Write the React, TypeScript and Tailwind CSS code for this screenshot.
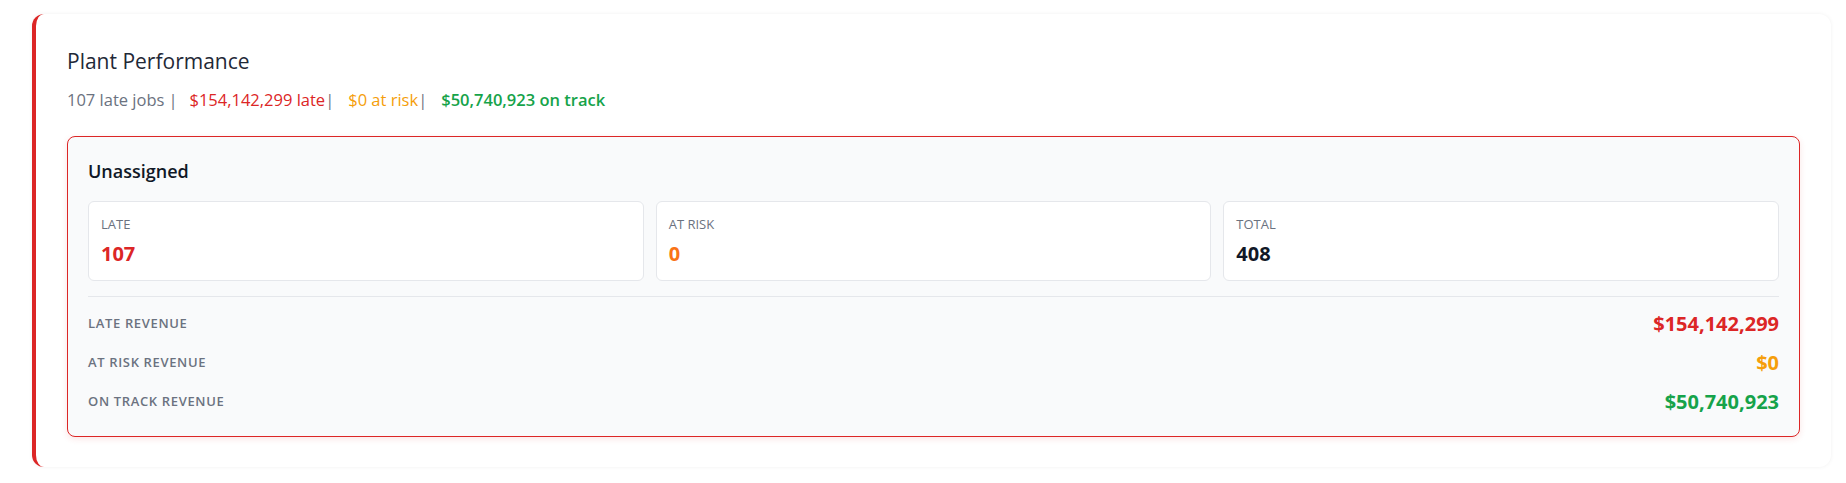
import React from "react";

type Stat = {
  label: string;
  value: string;
  tone: string;
};

type RevenueRow = {
  label: string;
  value: string;
  tone: string;
};

const stats: Stat[] = [
  { label: "Late", value: "107", tone: "text-[#dc2626]" },
  { label: "At Risk", value: "0", tone: "text-[#f97316]" },
  { label: "Total", value: "408", tone: "text-[#111827]" },
];

const revenue: RevenueRow[] = [
  { label: "Late Revenue", value: "$154,142,299", tone: "text-[#dc2626]" },
  { label: "At Risk Revenue", value: "$0", tone: "text-[#f59e0b]" },
  { label: "On Track Revenue", value: "$50,740,923", tone: "text-[#16a34a]" },
];

export default function App() {
  return (
    <div
      className="min-h-screen w-full bg-white pt-[14px] pb-4 pl-8 pr-[15px]"
      style={{ fontFamily: '"Open Sans", "Noto Sans", sans-serif' }}
    >
      <div className="w-full rounded-xl border-l-4 border-[#dc2626] bg-white px-[31px] pt-8 pb-[30px] shadow-[0_0_4px_rgba(0,0,0,0.06)]">
        <h1 className="text-[21px] leading-[30px] font-medium text-[#1f2937]">Plant Performance</h1>
        <p className="mt-3 text-[16.5px] leading-6 text-[#6b7280]">
          <span>107 late jobs</span>
          <span className="ml-1">|</span>
          <span className="ml-3 font-medium text-[#dc2626]">$154,142,299 late</span>
          <span>|</span>
          <span className="ml-[14px] font-medium text-[#f59e0b]">$0 at risk</span>
          <span>|</span>
          <span className="ml-[14px] font-semibold text-[#16a34a]">$50,740,923 on track</span>
        </p>

        <section className="mt-6 rounded-lg border border-[#dc2626] bg-[#f9fafb] p-5 shadow-[0_2px_6px_rgba(220,38,38,0.12)]">
          <h2 className="text-lg leading-7 font-semibold text-[#111827]">Unassigned</h2>

          <div className="mt-4 grid grid-cols-3 gap-3">
            {stats.map((stat) => (
              <div key={stat.label} className="rounded-md border border-[#e5e7eb] bg-white p-3">
                <div className="text-[13px] leading-5 font-medium uppercase text-[#6b7280]">{stat.label}</div>
                <div className={`mt-1.5 text-xl leading-7 font-bold ${stat.tone}`}>{stat.value}</div>
              </div>
            ))}
          </div>

          <div className="mt-[15px] flex flex-col gap-[11px] border-t border-[#e5e7eb] pt-[13px]">
            {revenue.map((row) => (
              <div key={row.label} className="flex items-center justify-between">
                <span className="text-[13px] font-semibold uppercase tracking-wider text-[#6b7280]">
                  {row.label}
                </span>
                <span className={`text-xl leading-7 font-bold ${row.tone}`}>{row.value}</span>
              </div>
            ))}
          </div>
        </section>
      </div>
    </div>
  );
}
